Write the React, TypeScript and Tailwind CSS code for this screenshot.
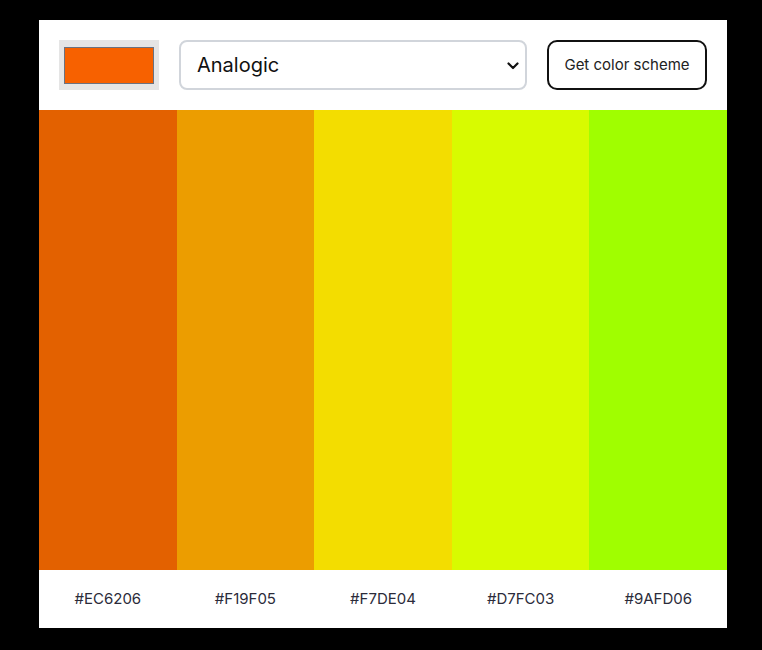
import { useState } from "react";

// hex labels as returned by the api, fills as they show on screen
const SCHEME = [
  { hex: "#EC6206", fill: "#e36100" },
  { hex: "#F19F05", fill: "#ec9d00" },
  { hex: "#F7DE04", fill: "#f3dd00" },
  { hex: "#D7FC03", fill: "#d8fb00" },
  { hex: "#9AFD06", fill: "#a0fe00" },
];

function Chevron() {
  return (
    <svg width="12" height="8" viewBox="0 0 12 8" className="pointer-events-none absolute right-[8px] top-[22px]">
      <path d="M1.5 1.5 L6 6 L10.5 1.5" fill="none" stroke="#111" strokeWidth="2.2" strokeLinecap="round" strokeLinejoin="round" />
    </svg>
  );
}

export default function App() {
  const [mode, setMode] = useState("analogic");
  const [seed] = useState("#f76100");

  return (
    <div className="min-h-[650px] bg-black pt-[20px] font-['Inter',sans-serif]">
      <div className="ml-[39px] flex w-[688px] flex-col bg-white">
        {/* Controls */}
        <div className="flex h-[90px] items-center gap-[20px] px-[20px]">
          <div className="flex h-[50px] w-[100px] items-center justify-center bg-[#e5e5e5]">
            <div className="h-[37px] w-[90px] border border-[#6b7280]" style={{ backgroundColor: seed }} />
          </div>
          <div className="relative h-[50px] flex-1">
            <select
              value={mode}
              onChange={(e) => setMode(e.target.value)}
              className="h-full w-full appearance-none rounded-[8px] border-2 border-[#d1d5db] bg-white pl-[16px] text-[20px] text-[#111] outline-none"
            >
              <option value="monochrome">Monochrome</option>
              <option value="analogic">Analogic</option>
              <option value="complement">Complement</option>
            </select>
            <Chevron />
          </div>
          <button className="h-[50px] w-[160px] rounded-[10px] border-2 border-[#111] bg-white text-[15px] text-[#222]">
            Get color scheme
          </button>
        </div>

        {/* Colour columns */}
        <div className="grid h-[460px] grid-cols-5">
          {SCHEME.map((c) => (
            <div key={c.hex} style={{ backgroundColor: c.fill }} />
          ))}
        </div>

        {/* Hex labels */}
        <div className="grid h-[58px] grid-cols-5 items-center">
          {SCHEME.map((c) => (
            <p key={c.hex} className="text-center text-[15px] text-[#2b2b3a]">{c.hex}</p>
          ))}
        </div>
      </div>
    </div>
  );
}
